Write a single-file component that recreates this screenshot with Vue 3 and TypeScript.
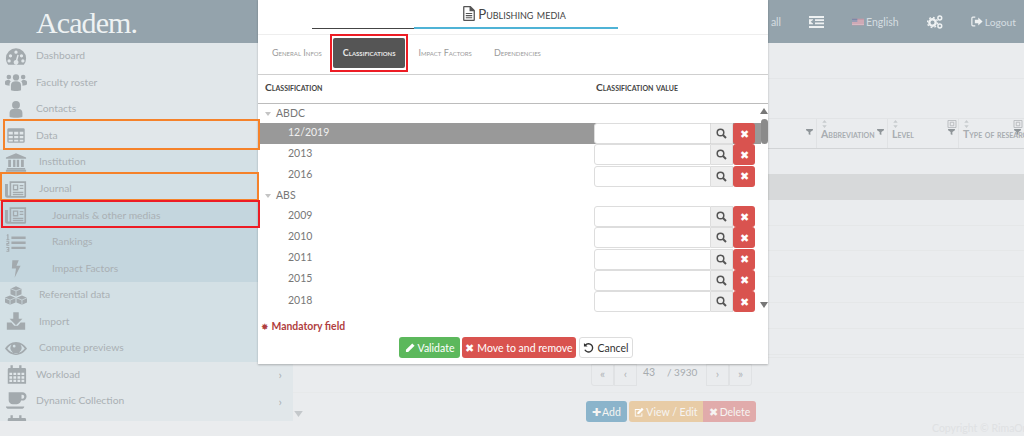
<script setup lang="ts">
interface MenuItem { label: string; icon: string; level: number; band: string; arrow?: boolean }
const menu: MenuItem[] = [
  { label: 'Dashboard', icon: 'dash', level: 0, band: 'b0' },
  { label: 'Faculty roster', icon: 'users', level: 0, band: 'b0' },
  { label: 'Contacts', icon: 'user', level: 0, band: 'b0' },
  { label: 'Data', icon: 'table', level: 0, band: 'b0' },
  { label: 'Institution', icon: 'bank', level: 1, band: 'b1' },
  { label: 'Journal', icon: 'news', level: 1, band: 'b1' },
  { label: 'Journals & other medias', icon: 'news', level: 2, band: 'b2' },
  { label: 'Rankings', icon: 'list', level: 2, band: 'b2' },
  { label: 'Impact Factors', icon: 'bolt', level: 2, band: 'b2' },
  { label: 'Referential data', icon: 'cubes', level: 1, band: 'b1' },
  { label: 'Import', icon: 'import', level: 1, band: 'b1' },
  { label: 'Compute previews', icon: 'eye', level: 1, band: 'b1' },
  { label: 'Workload', icon: 'cal', level: 0, band: 'b0', arrow: true },
  { label: 'Dynamic Collection', icon: 'cup', level: 0, band: 'b0', arrow: true }
]
const tabs = ['General Infos', 'Classifications', 'Impact Factors', 'Dependencies']
const groups = [
  { name: 'ABDC', rows: ['12/2019', '2013', '2016'] },
  { name: 'ABS', rows: ['2009', '2010', '2011', '2015', '2018'] }
]
const columns = [
  { label: 'Abbreviation', w: 71, sq: false },
  { label: 'Level', w: 71, sq: true },
  { label: 'Type of research', w: 66, sq: true }
]
const tableRows = [0, 1, 2, 3, 4, 5, 6, 7, 8, 9]
</script>

<template>
  <div class="page">
    <header class="topbar">
      <div class="logo">Academ.</div>
      <nav class="topnav">
        <span class="top-all">all</span>
        <svg class="ic-indent" viewBox="0 0 15 12"><path d="M0 0h15v2H0zM6 3.300h9v1.600H6zM6 6.600h9v1.600H6zM0 10h15v2H0zM0 3.300h4v5H0z" fill="#eef1f2"/><path d="M4 4v3.600L1.600 5.800z" fill="#94a3ac"/></svg>
        <span class="lang">
          <svg class="flag" viewBox="0 0 18 10"><rect width="18" height="10" fill="#c79aa8"/><path d="M0 0h8v5H0z" fill="#7d88a8"/><path d="M0 3h18v1H0zM0 6h18v1H0zM0 8.600h18v1H0z" fill="#e8d8dc"/></svg>
          English
        </span>
        <svg class="ic-gears" viewBox="0 0 16 14"><circle cx="5.500" cy="7.500" r="3.200" fill="none" stroke="#eef1f2" stroke-width="2.400"/><circle cx="5.500" cy="7.500" r="5" fill="none" stroke="#eef1f2" stroke-width="1.400" stroke-dasharray="1.800 2.100"/><circle cx="12.800" cy="3" r="1.900" fill="none" stroke="#eef1f2" stroke-width="1.500"/><circle cx="12.800" cy="11" r="1.900" fill="none" stroke="#eef1f2" stroke-width="1.500"/></svg>
        <span class="logout">
          <svg class="ic-logout" viewBox="0 0 14 12"><path d="M5 1H2.200A1.200 1.200 0 0 0 1 2.200v7.600A1.200 1.200 0 0 0 2.200 11H5" fill="none" stroke="#eef1f2" stroke-width="1.400"/><path d="M4.500 4h4V1.200L13.500 6l-5 4.800V8h-4z" fill="#eef1f2"/></svg>
          Logout
        </span>
      </nav>
    </header>

    <div class="body">
      <aside class="sidebar">
        <div v-for="m in menu" :key="m.label" class="mrow" :class="[m.band, 'lv' + m.level]">
          <svg class="micon" viewBox="0 0 24 20" fill="#a3aaae">
            <template v-if="m.icon === 'dash'">
              <path fill-rule="evenodd" d="M12 1a11 11 0 0 0-11 11c0 2.600.9 5 2.400 6.900h17.200A11 11 0 0 0 23 12 11 11 0 0 0 12 1zM6 7.500a1.800 1.800 0 1 1 0 3.600 1.800 1.800 0 0 1 0-3.600zM12 3.500a1.800 1.800 0 1 1 0 3.600 1.800 1.800 0 0 1 0-3.600zM18 7.500a1.800 1.800 0 1 1 0 3.600 1.800 1.800 0 0 1 0-3.600zM4.500 13a1.800 1.800 0 1 1 0 3.600 1.800 1.800 0 0 1 0-3.600zM19.500 13a1.800 1.800 0 1 1 0 3.600 1.800 1.800 0 0 1 0-3.600zM13.500 8l1.500.5-1.500 5.600a2.600 2.600 0 1 1-1.600-.4z"/>
            </template>
            <template v-else-if="m.icon === 'users'">
              <circle cx="12" cy="4.500" r="3.400"/><circle cx="4.200" cy="4" r="2.500"/><circle cx="19.800" cy="4" r="2.500"/>
              <path d="M6.500 18.500v-5.500c0-2.500 2-4.300 5.500-4.300s5.500 1.800 5.500 4.300v5.500c-1.500 1-9.500 1-11 0zM0 12V9.500C0 8 1.600 7 4.300 7l2 1.500C5 10 5 11 5 13.500 3 13.500 0 13 0 12zM24 12V9.500C24 8 22.400 7 19.700 7l-2 1.500c1.300 1.500 1.300 2.500 1.300 5 2 0 5-.5 5-1.500z"/>
            </template>
            <template v-else-if="m.icon === 'user'">
              <circle cx="12" cy="5" r="4.300"/><path d="M5 18v-4.500C5 11 6.800 9.500 8.800 9.500h6.400C17.200 9.500 19 11 19 13.500V18c-1.500 1.500-12.500 1.500-14 0z"/>
            </template>
            <template v-else-if="m.icon === 'table'">
              <path fill-rule="evenodd" d="M4 2h16a1.500 1.500 0 0 1 1.500 1.500v13A1.500 1.500 0 0 1 20 18H4a1.500 1.500 0 0 1-1.500-1.500v-13A1.500 1.500 0 0 1 4 2zm0 4v3h4.500V6zm6 0v3h4.500V6zm6 0v3h4V6zM4 10.500v2.500h4.500v-2.500zm6 0v2.500h4.500v-2.500zm6 0v2.500h4v-2.500zM4 14.500v2h4.500v-2zm6 0v2h4.500v-2zm6 0v2h4v-2z"/>
            </template>
            <template v-else-if="m.icon === 'bank'">
              <path d="M12 0l11 4.500v1.500H1V4.500zM3.500 7h3v8h-3zM8.800 7h2.600v8H8.800zM12.800 7h2.600v8h-2.600zM17.500 7h3v8h-3zM2 16h20v1.500H2zM1 18h22v2H1z"/>
            </template>
            <template v-else-if="m.icon === 'news'">
              <path fill-rule="evenodd" d="M5 1h18v16.500A1.500 1.500 0 0 1 21.500 19H2.500A2.500 2.500 0 0 1 0 16.500V4h3.200v12.500h1.800zM6.800 2.800v14.400h14.400V2.800zM8.500 4.500h6v6.500h-6zM10 6v3.500h3V6zM16 5h4v1.500h-4zM16 8h4v1.500h-4zM8.500 12.500H20V14H8.500zM8.500 15H20v1.200H8.500z"/>
            </template>
            <template v-else-if="m.icon === 'list'">
              <path d="M7 3.500h15.500v2.600H7zM7 9h15.500v2.600H7zM7 14.500h15.500v2.600H7zM2.500 1h1.300v5.500h1v1H1.500v-1h1V2.300H1.500z"/>
              <path d="M1.500 8.500h3.200v3H2.700v1h2v1H1.500v-3h2v-1h-2zM1.500 15h3.200v5H1.500v-1h2v-1h-1.500v-1h1.500v-1h-2z"/>
            </template>
            <template v-else-if="m.icon === 'bolt'">
              <path d="M8 1h7l-2.500 6H17L10.500 20 12 10H7.500z"/>
            </template>
            <template v-else-if="m.icon === 'cubes'">
              <path d="M12 0l6 2.500v6l-6 2.500-6-2.500v-6zM5.500 10l6 2.500v5l-6 2.500-6-2.500v-5zM18.500 10l5.500 2.500v5L18.500 20 12.500 17.500v-5z"/>
              <path d="M6 2.500l6 2.500 6-2.500M-.5 12.500l6 2.500 6-2.500M12.500 12.500l6 2.500 5.500-2.500M12 5v6M5.500 15v5M18.500 15v5" stroke="#d2e0e5" stroke-width=".8" fill="none"/>
            </template>
            <template v-else-if="m.icon === 'import'">
              <path d="M9 0h6v7h4l-7 7-7-7h4zM2 11h5l3 3.500h4l3-3.500h5v8H2zM16 15.500h2v1.500h-2zM19 15.500h2v1.500h-2z"/>
            </template>
            <template v-else-if="m.icon === 'eye'">
              <path fill-rule="evenodd" d="M12 3c5.500 0 9.500 3.500 12 7-2.500 3.500-6.500 7-12 7S2.500 13.500 0 10c2.500-3.500 6.500-7 12-7zm-9.500 7c2 2.600 5 5 9.500 5s7.500-2.400 9.500-5c-1-1.500-2.500-3-4.500-4a6 6 0 1 1-10 0c-2 1-3.500 2.500-4.500 4zM10 6a1.500 1.500 0 1 0 0 3 1.500 1.500 0 0 0 0-3z"/>
            </template>
            <template v-else-if="m.icon === 'cal'">
              <path fill-rule="evenodd" d="M6 0h2.500v3H15.500V0H18v3h3.500A1.500 1.500 0 0 1 23 4.500V20H3V4.500A1.500 1.500 0 0 1 4.500 3H6zM4.800 8v2.500h3V8zm4.400 0v2.500h3V8zm4.400 0v2.500h3V8zm4.400 0v2.500h3V8zM4.800 12v2.500h3V12zm4.400 0v2.500h3V12zm4.400 0v2.500h3V12zm4.400 0v2.500h3V12zM4.800 15.800v2.500h3v-2.500zm4.400 0v2.500h3v-2.500zm4.400 0v2.500h3v-2.500zm4.400 0v2.500h3v-2.500z"/>
            </template>
            <template v-else-if="m.icon === 'cup'">
              <path fill-rule="evenodd" d="M4 0h15a4 4 0 0 1 0 9h-1.500A5 5 0 0 1 13 13H8.500A4.500 4.500 0 0 1 4 8.500zm14 2.500V7h.8a2.200 2.200 0 0 0 0-4.500zM1 15.500h20c0 1.500-1.500 2.500-3 2.500H4c-1.500 0-3-1-3-2.500z"/>
            </template>
          </svg>
          <span class="mlabel">{{ m.label }}</span>
          <span v-if="m.arrow" class="marrow">›</span>
        </div>
        <div class="mrow b0 clip">
          <svg class="micon" viewBox="0 0 24 20" fill="#a3aaae"><path d="M6 0h2.500v3H15.500V0H18v3h3.500A1.500 1.500 0 0 1 23 4.500V20H3V4.500A1.500 1.500 0 0 1 4.500 3H6z"/></svg>
        </div>
      </aside>

      <main class="content">
        <div class="ctop"></div>
        <div class="thead">
          <div class="th th-first">
            <svg class="funnel" viewBox="0 0 8 7"><path d="M0 0h8v1.400L5 3.600V7L3 6V3.600L0 1.400z"/></svg>
          </div>
          <div v-for="c in columns" :key="c.label" class="th" :style="{ width: c.w + 'px' }">
            <svg class="sort" viewBox="0 0 5 9"><path d="M2.500 0L5 3H0zM2.500 9L0 6h5z"/></svg>
            <span class="thl">{{ c.label }}</span>
            <svg class="funnel" viewBox="0 0 8 7"><path d="M0 0h8v1.400L5 3.600V7L3 6V3.600L0 1.400z"/></svg>
            <svg v-if="c.sq" class="sq" viewBox="0 0 10 9"><path d="M.5.500h9v8h-9z" fill="none" stroke="#b4b8bb"/><path d="M3 2.500h4v4H3z" fill="none" stroke="#b4b8bb"/></svg>
          </div>
        </div>
        <div class="tbody">
          <div v-for="i in tableRows" :key="i" class="trow" :class="{ sel: i === 1 }"></div>
        </div>
        <div class="pagerwrap">
          <div class="pager">
            <span class="pg">«</span><span class="pg">‹</span>
            <span class="pnum"><span class="pinput">43</span>/ 3930</span>
            <span class="pg">›</span><span class="pg">»</span>
          </div>
        </div>
        <div class="actions">
          <span class="abtn add"><b>✚</b> Add</span>
          <span class="abtn view"><svg class="ed" viewBox="0 0 12 11"><path d="M1 2h6v1H2v7h7V7h1v4H1zM9.500.5L11.500 2.500 6 8H4V6z" fill="#fff"/></svg> View / Edit</span>
          <span class="abtn del"><b>✖</b> Delete</span>
        </div>
        <div class="copy">Copyright © RimaOn</div>
      </main>
    </div>

    <svg class="side-tri" viewBox="0 0 10 7"><path d="M0 0h10L5 7z" fill="#c4c8cb"/></svg>

    <section class="modal">
      <div class="mtitle">
        <svg class="doc" viewBox="0 0 11 14"><path fill-rule="evenodd" d="M1 0h6l4 4v9a1 1 0 0 1-1 1H1a1 1 0 0 1-1-1V1a1 1 0 0 1 1-1zm.2 1.200v11.600h8.600V5H6V1.200zM2.500 6.500h6v1h-6zM2.500 8.500h6v1h-6zM2.500 10.500h6v1h-6z" fill="#555"/></svg>
        <span>Publishing media</span>
      </div>
      <div class="underline"><i class="u1"></i><i class="u2"></i></div>
      <div class="tabs">
        <span v-for="t in tabs" :key="t" class="tab" :class="{ active: t === 'Classifications' }">{{ t }}</span>
      </div>
      <div class="chead">
        <span class="ch1">Classification</span>
        <span class="ch2">Classification value</span>
      </div>
      <div class="list">
        <div class="rows">
          <template v-for="g in groups" :key="g.name">
            <div class="group"><i class="tri"></i><span class="gname">{{ g.name }}</span></div>
            <div v-for="r in g.rows" :key="g.name + r" class="row" :class="{ sel: r === '12/2019' }">
              <span class="rlabel">{{ r }}</span>
              <span class="field">
                <span class="inp"></span>
                <span class="addon">
                  <svg viewBox="0 0 11 11"><circle cx="4.500" cy="4.500" r="3.300" fill="none" stroke="#555" stroke-width="1.500"/><path d="M7 7l3 3" stroke="#555" stroke-width="2"/></svg>
                </span>
                <span class="xbtn">✖</span>
              </span>
            </div>
          </template>
        </div>
        <div class="scroll">
          <i class="up"></i>
          <i class="thumb"></i>
          <i class="down"></i>
        </div>
      </div>
      <div class="mand"><span class="star">✸</span> Mandatory field</div>
      <div class="mfoot">
        <span class="btn green"><svg class="pen" viewBox="0 0 11 11"><path d="M8 .5L10.500 3 3.500 10H1V7.500z" fill="#fff"/></svg> Validate</span>
        <span class="btn red"><b>✖</b> Move to and remove</span>
        <span class="btn white"><svg class="undo" viewBox="0 0 12 12"><path d="M2.500 3.500A4.500 4.500 0 1 1 2 8.500" fill="none" stroke="#333" stroke-width="1.500"/><path d="M1 1v4h4z" fill="#333"/></svg> Cancel</span>
      </div>
    </section>

    <i class="mark orange m-data"></i>
    <i class="mark orange m-journal"></i>
    <i class="mark redm m-medias"></i>
    <i class="mark redm m-tab"></i>
  </div>
</template>

<style>
html, body { margin: 0; padding: 0; }
</style>

<style scoped>
.page {
  position: relative;
  width: 1024px;
  height: 436px;
  overflow: hidden;
  background: #eaecee;
  font-family: Lato, "Liberation Sans", sans-serif;
  font-size: 10.500px;
  color: #aab0b4;
}
.topbar {
  height: 43px;
  background: #94a3ac;
  display: flex;
  align-items: center;
  justify-content: space-between;
}
.logo {
  margin-left: 36px;
  padding-top: 3px;
  font-family: "Liberation Serif", serif;
  font-size: 30px;
  letter-spacing: -0.9px;
  color: #eef2f3;
}
.topnav {
  display: flex;
  align-items: center;
  color: #d5dde1;
  font-size: 10.500px;
}
.top-all { margin-right: 28px; }
.ic-indent { width: 15px; height: 12px; margin-right: 28px; }
.lang { display: inline-flex; align-items: center; gap: 2px; margin-right: 28px; }
.flag { width: 12px; height: 8px; }
.ic-gears { width: 16px; height: 14px; margin-right: 28px; }
.logout { display: inline-flex; align-items: center; gap: 2px; margin-right: 8px; font-size: 10.300px; }
.ic-logout { width: 12px; height: 11px; }
.body { display: flex; height: 393px; }
.sidebar {
  width: 293px;
  height: 378px;
  flex: none;
  overflow: hidden;
  background: #e1e7ea;
}
.mrow {
  height: 26.550px;
  display: flex;
  align-items: center;
  padding-left: 5px;
  box-sizing: border-box;
}
.mrow.clip { height: 7px; align-items: flex-start; overflow: hidden; }
.b0 { background: #e1e7ea; }
.b1 { background: #d3e0e5; }
.b2 { background: #c4d6de; }
.micon { width: 22px; height: 19px; flex: none; }
.mlabel { margin-left: 9px; padding-bottom: 2px; white-space: nowrap; font-size: 10.300px; }
.lv1 .mlabel { margin-left: 12px; }
.lv2 .mlabel { margin-left: 25px; }
.marrow { margin-left: auto; margin-right: 11px; font-size: 12px; color: #a9b0b4; }
.content {
  flex: 1;
  display: flex;
  flex-direction: column;
  min-width: 0;
}
.ctop { height: 35px; flex: none; border-bottom: 1px solid #e4e6e8; margin-bottom: 39px; }
.thead {
  height: 31px;
  flex: none;
  display: flex;
  border-top: 1px solid #e2e4e6;
  border-bottom: 1px solid #d2d4d6;
  box-sizing: border-box;
}
.th {
  position: relative;
  box-sizing: border-box;
  border-left: 1px solid #e0e2e4;
  height: 100%;
  font-variant: small-caps;
  color: #a8adb1;
  display: flex;
  align-items: center;
  padding-left: 4px;
  flex: none;
  white-space: nowrap;
  overflow: hidden;
}
.th-first { flex: 1; border-left: none; }
.thl { font-size: 10.500px; font-weight: 700; }
.sort { position: absolute; left: 5px; top: 1px; width: 5px; height: 8px; fill: #c8cbce; }
.funnel { position: absolute; right: 3px; top: 10px; width: 7px; height: 6px; fill: #8f9599; }
.sq { position: absolute; right: 1px; top: 1px; width: 10px; height: 8px; }
.tbody { height: 208px; flex: none; overflow: hidden; }
.trow { height: 25.800px; border-bottom: 1px solid #e5e7e8; box-sizing: border-box; }
.trow:first-child { height: 25px; }
.trow:first-child, .trow.sel { border-bottom: none; }
.trow.sel { background: #d7d9da; }
.pagerwrap {
  flex: none;
  padding: 6px 0 6px 298px;
  border-top: 1px solid #e5e7e8;
  border-bottom: 1px solid #e7e9ea;
}
.pager {
  display: flex;
  height: 22px;
  color: #aab0b4;
}
.pg {
  box-sizing: border-box;
  width: 23px;
  height: 22px;
  border: 1px solid #e0e2e4;
  text-align: center;
  line-height: 18px;
  font-size: 12px;
  color: #b2b6b9;
}
.pg:first-child { border-radius: 0 0 0 3px; }
.pg:last-child { border-radius: 0 0 3px 0; }
.pnum { width: 69px; padding-left: 6px; box-sizing: border-box; white-space: nowrap; color: #a6abae; line-height: 16px; font-size: 10px; }
.pinput { display: inline-block; width: 24px; font-size: 10.500px; }
.actions {
  display: flex;
  flex: none;
  margin-left: 293px;
  margin-top: 8px;
  height: 21px;
}
.abtn {
  display: inline-flex;
  align-items: center;
  justify-content: center;
  height: 21px;
  color: #f6f4f2;
  border-radius: 3px;
  white-space: nowrap;
}
.abtn b { font-size: 11px; font-weight: 400; }
.add { width: 41px; background: #8bb4cb; margin-right: 2px; gap: 1px; }
.view { width: 74px; background: #e8cca6; border-radius: 3px 0 0 3px; gap: 2px; }
.del { width: 53px; background: #e1abab; border-radius: 0 3px 3px 0; gap: 2px; }
.ed { width: 10px; height: 10px; }
.copy {
  margin-top: 0;
  margin-left: 639px;
  width: 92px;
  overflow: hidden;
  white-space: nowrap;
  font-size: 10.500px;
  color: #dfe1e3;
}
.side-tri { position: absolute; left: 294px; top: 411px; width: 9px; height: 6px; }
.modal {
  position: absolute;
  left: 258px;
  top: -1px;
  width: 510px;
  height: 365px;
  background: #fff;
  box-shadow: 0 1px 2px rgba(0, 0, 0, .25);
  display: flex;
  flex-direction: column;
  color: #777;
}
.mtitle {
  height: 28px;
  display: flex;
  justify-content: center;
  align-items: center;
  gap: 3px;
  font-variant: small-caps;
  font-size: 13.300px;
  color: #444;
  padding-left: 3px;
  padding-top: 1px;
  box-sizing: border-box;
}
.doc { width: 12px; height: 15px; }
.underline { display: flex; margin-left: 54px; height: 2px; }
.u1 { width: 102px; height: 1px; background: #444; margin-top: 1px; }
.u2 { width: 204px; height: 2px; background: #4fb3d6; }
.tabs {
  margin-top: 5px;
  border-top: 1px solid #eeeeee;
  border-bottom: 1px solid #cfcfcf;
  height: 41px;
  flex: none;
  box-sizing: border-box;
  padding: 3px 0 0 3px;
  display: flex;
  align-items: flex-start;
}
.tab {
  height: 30px;
  line-height: 30px;
  padding: 0 11px;
  font-variant: small-caps;
  font-size: 9px;
  color: #9a9a9a;
  white-space: nowrap;
}
.tab.active {
  background: #555;
  color: #e8e8e8;
  font-weight: 700;
  border-radius: 2px;
  padding: 0 10px;
  margin-right: 2px;
}
.chead {
  height: 29px;
  flex: none;
  padding-bottom: 4px;
  border-bottom: 1px solid #bcbcbc;
  box-sizing: border-box;
  display: flex;
  align-items: center;
  font-variant: small-caps;
  font-weight: 700;
  color: #444;
  font-size: 10.300px;
}
.ch1 { width: 338px; padding-left: 7px; box-sizing: border-box; }
.ch2 { white-space: nowrap; }
.list { display: flex; height: 209.500px; flex: none; overflow: hidden; }
.rows { width: 503px; flex: none; }
.group {
  height: 19px;
  display: flex;
  align-items: center;
  padding-left: 7px;
  color: #777;
  font-size: 10.500px;
}
.gname { padding-bottom: 2px; }
.tri {
  display: inline-block;
  width: 0;
  height: 0;
  border-left: 3.500px solid transparent;
  border-right: 3.500px solid transparent;
  border-top: 4px solid #c4c4c4;
  margin-right: 5px;
}
.row {
  height: 21.300px;
  display: flex;
  align-items: center;
  padding-left: 30px;
  font-size: 10.500px;
  color: #777;
}
.row.sel { background: #999; color: #f0f0f0; }
.rlabel { width: 306px; flex: none; padding-bottom: 4px; }
.field { display: flex; height: 21px; }
.inp {
  width: 117px;
  box-sizing: border-box;
  background: #fff;
  border: 1px solid #ddd;
  border-radius: 3px 0 0 3px;
}
.addon {
  width: 22px;
  box-sizing: border-box;
  background: #eee;
  border: 1px solid #ddd;
  border-left: none;
  display: flex;
  align-items: center;
  justify-content: center;
}
.addon svg { width: 11px; height: 11px; }
.xbtn {
  width: 22px;
  background: #d9534f;
  border-radius: 3px;
  color: #fff;
  font-size: 11px;
  display: flex;
  align-items: center;
  justify-content: center;
}
.scroll {
  width: 7px;
  position: relative;
}
.scroll .up, .scroll .down {
  position: absolute;
  left: -1px;
  width: 0;
  height: 0;
  border-left: 4.500px solid transparent;
  border-right: 4.500px solid transparent;
}
.up { top: 4px; border-bottom: 6px solid #777; }
.down { top: 198px; border-top: 6px solid #777; }
.thumb {
  position: absolute;
  left: 0;
  top: 15px;
  width: 7px;
  height: 25px;
  border-radius: 4px;
  background: #8a8a8a;
}
.mand {
  margin-top: 5px;
  padding-left: 3px;
  color: #b04040;
  font-weight: 700;
  font-size: 10.400px;
  line-height: 15px;
}
.star { font-size: 9px; font-weight: 400; }
.mfoot {
  display: flex;
  gap: 2px;
  margin-top: 3.500px;
  margin-left: 141px;
}
.btn {
  height: 21px;
  border-radius: 3px;
  display: inline-flex;
  align-items: center;
  justify-content: center;
  font-size: 10.500px;
  color: #fff;
  white-space: nowrap;
  gap: 3px;
  box-sizing: border-box;
}
.btn b { font-size: 11px; font-weight: 400; }
.green { width: 61px; background: #5cb85c; }
.red { width: 114px; background: #d9534f; }
.white { width: 54px; margin-left: 1px; background: #fff; color: #333; border: 1px solid #ddd; }
.pen { width: 10px; height: 10px; }
.undo { width: 11px; height: 11px; }
.mark { position: absolute; box-sizing: border-box; pointer-events: none; }
.orange { border: 2px solid #f5822a; }
.redm { border: 2px solid #ed1c24; }
.m-data { left: 3px; top: 119px; width: 257px; height: 31px; }
.m-journal { left: 0; top: 172px; width: 259px; height: 29px; }
.m-medias { left: 1px; top: 200px; width: 259px; height: 28px; }
.m-tab { left: 330px; top: 34px; width: 78px; height: 38px; }
</style>
